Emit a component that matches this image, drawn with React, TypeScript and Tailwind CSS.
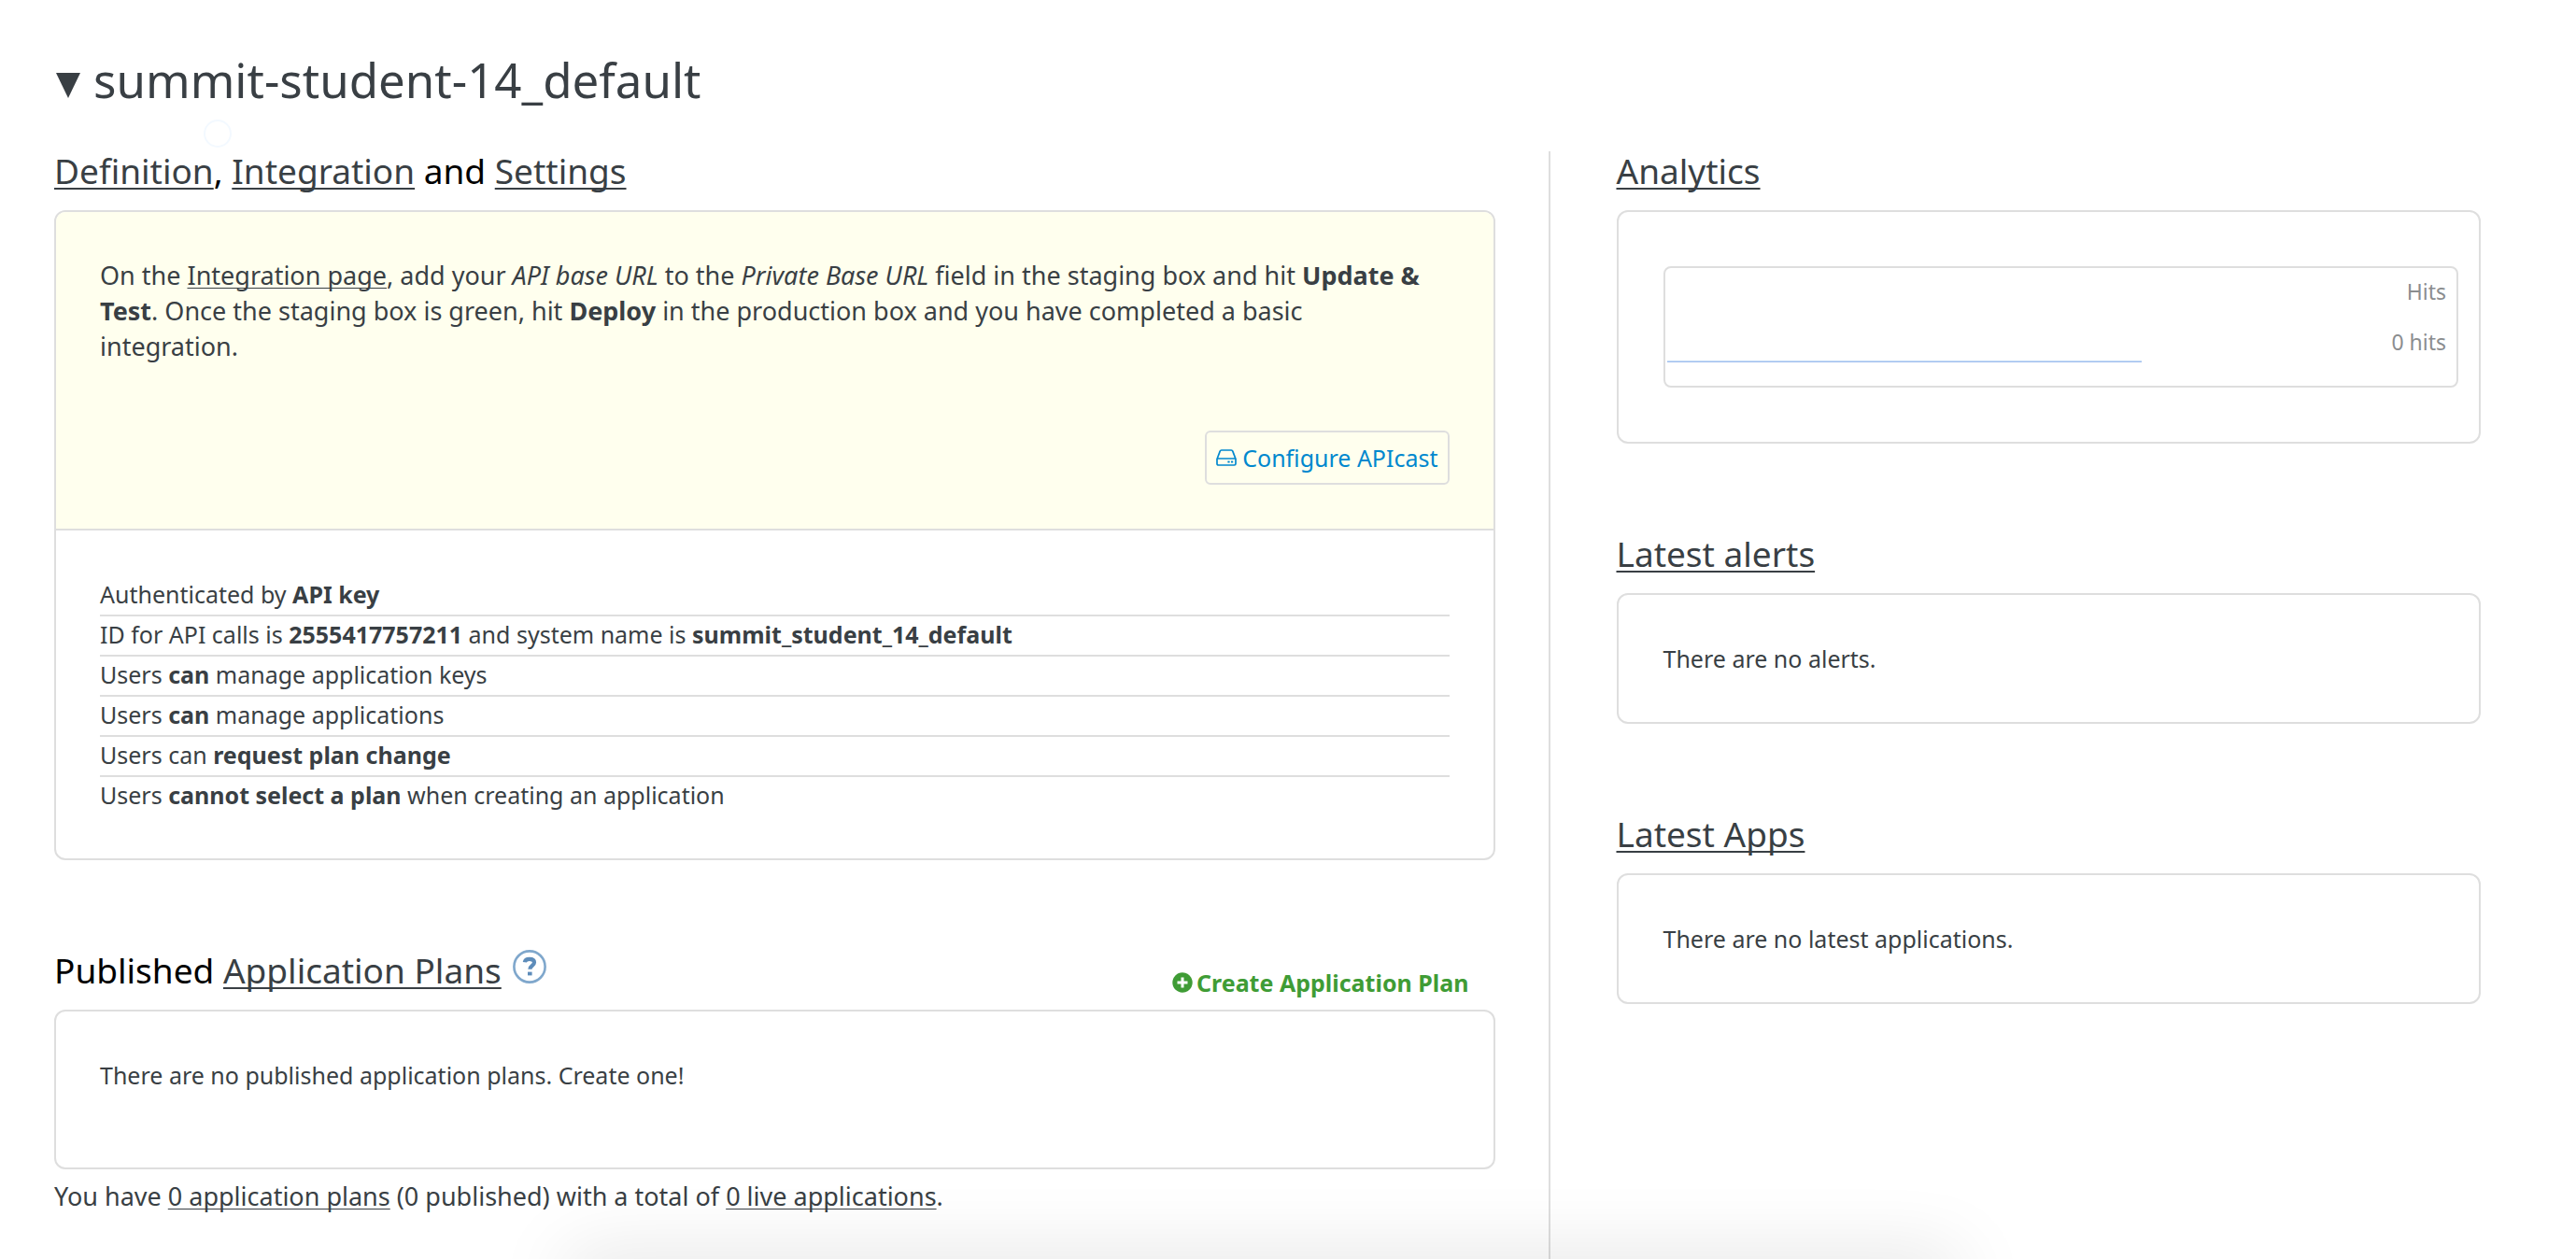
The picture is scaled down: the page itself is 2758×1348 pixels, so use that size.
import React from "react";

function TextLink({ children }: { children: React.ReactNode }) {
  return (
    <a
      href="#"
      className="text-[#393f44] underline decoration-1 underline-offset-3 [text-decoration-skip-ink:none]"
    >
      {children}
    </a>
  );
}

function HeadingLink({ children }: { children: React.ReactNode }) {
  return (
    <a
      href="#"
      className="text-[#393f44] underline decoration-2 underline-offset-4 [text-decoration-skip-ink:none]"
    >
      {children}
    </a>
  );
}

function SectionHeading({ children }: { children: React.ReactNode }) {
  return <h2 className="text-[37px] leading-9 text-black">{children}</h2>;
}

function Panel({ children, className = "" }: { children: React.ReactNode; className?: string }) {
  return (
    <div className={`overflow-hidden rounded-xl border-2 border-[#dedede] ${className}`}>{children}</div>
  );
}

function ServerIcon() {
  return (
    <svg aria-hidden="true" viewBox="0 0 22 18" className="h-[18px] w-[22px]" fill="none">
      <path
        d="M1 10.5 4.2 2.1Q4.6 1 5.7 1h10.6q1.1 0 1.5 1.1L21 10.5V15.4q0 1.6-1.6 1.6H2.6Q1 17 1 15.4ZM1.2 10h19.6"
        stroke="currentColor"
        strokeWidth="1.7"
      />
      <path d="M12.4 12.4h2.200v2.200h-2.200zM16 12.4h2.200v2.200h-2.200z" fill="currentColor" />
    </svg>
  );
}

function PlusCircleIcon() {
  return (
    <svg aria-hidden="true" viewBox="0 0 22 22" className="size-[22px]">
      <circle cx="11" cy="11" r="10.7" fill="currentColor" />
      <path d="M11 5.5v11M5.5 11h11" stroke="#fff" strokeWidth="3" />
    </svg>
  );
}

function HelpIcon() {
  return (
    <svg aria-hidden="true" viewBox="0 0 36 36" className="size-9" fill="none">
      <circle cx="18" cy="18" r="16.6" stroke="#7fa7cc" strokeWidth="2.6" />
      <path
        d="M12.800 13.200c.4-2.600 2.400-3.400 5-3.400 2.900 0 5.200 1.200 5.200 3.800 0 3.300-4.600 3.400-4.600 7.200"
        stroke="#5d8cba"
        strokeWidth="4.2"
      />
      <path d="M16 23.600h4.600v3.800H16z" fill="#5d8cba" />
    </svg>
  );
}

const facts: React.ReactNode[] = [
  <>Authenticated by <b>API key</b></>,
  <>ID for API calls is <b>2555417757211</b> and system name is <b>summit_student_14_default</b></>,
  <>Users <b>can</b> manage application keys</>,
  <>Users <b>can</b> manage applications</>,
  <>Users can <b>request plan change</b></>,
  <>Users <b>cannot select a plan</b> when creating an application</>,
];

function SideSection({ title, children }: { title: string; children: React.ReactNode }) {
  return (
    <section>
      <SectionHeading>
        <HeadingLink>{title}</HeadingLink>
      </SectionHeading>
      <Panel className="mt-6">{children}</Panel>
    </section>
  );
}

export default function App() {
  return (
    <div className="relative flex min-h-screen flex-col overflow-hidden bg-white pl-[58px] pr-[102px] pt-[55px] font-['Noto_Sans','Open_Sans',sans-serif] text-[25px] leading-[38px] text-[#393f44]">
      <h1 className="text-[51px] leading-[60px]">
        <button type="button" aria-expanded="true" className="flex items-center gap-3">
          <svg aria-hidden="true" viewBox="0 0 30 40" className="h-10 w-[30px]">
            <path d="M2 13h26L15 40z" fill="currentColor" />
          </svg>
          summit-student-14_default
        </button>
      </h1>

      <div className="relative mt-[47px] grid grow grid-cols-[5fr_130px_3fr]">
        <span className="absolute left-[160px] -top-[34px] size-[30px] rounded-full border-2 border-[#f3f9ff]" />

        <main className="pt-[3px]">
          <SectionHeading>
            <HeadingLink>Definition</HeadingLink>, <HeadingLink>Integration</HeadingLink> and{" "}
            <HeadingLink>Settings</HeadingLink>
          </SectionHeading>
          <Panel className="mt-6">
            <div className="border-b-2 border-[#dedede] bg-[#ffffee] px-[47px] pt-[49px] pb-[47px]">
              <p className="pr-3 text-[27px]">
                On the <TextLink>Integration page</TextLink>, add your <i>API base URL</i> to the{" "}
                <i>Private Base URL</i> field in the staging box and hit <b>Update &amp; Test</b>. Once the staging
                box is green, hit <b>Deploy</b> in the production box and you have completed a basic integration.
              </p>
              <div className="mt-[71px] flex justify-end">
                <button
                  type="button"
                  className="flex items-center gap-1.5 rounded-md border-2 border-[#dedede] px-2.5 py-2 text-[#0088ce]"
                >
                  <ServerIcon />
                  Configure APIcast
                </button>
              </div>
            </div>
            <ul className="px-[47px] pt-[49px] pb-[46px]">
              {facts.map((fact, i) => (
                <li key={i} className="border-b-2 border-[#dedede] pb-[3px] last:border-0">
                  {fact}
                </li>
              ))}
            </ul>
          </Panel>

          <div className="mt-[100px] flex items-start justify-between">
            <div className="flex items-start gap-3">
              <SectionHeading>
                Published <HeadingLink>Application Plans</HeadingLink>
              </SectionHeading>
              <button type="button" aria-label="Help" className="-mt-1">
                <HelpIcon />
              </button>
            </div>
            <a
              href="#"
              className="mr-7 mt-5 flex items-center gap-1 leading-[22px] font-bold text-[#3f9c35]"
            >
              <PlusCircleIcon />
              Create Application Plan
            </a>
          </div>
          <Panel className="mt-[18px] px-[47px] pt-[49px] pb-20">
            <p>There are no published application plans. Create one!</p>
          </Panel>
          <p className="mt-2.5 text-[27px]">
            You have <TextLink>0 application plans</TextLink> (0 published) with a total of{" "}
            <TextLink>0 live applications</TextLink>.
          </p>
        </main>

        <div className="ml-[57px] w-0.5 bg-[#dedede]" />

        <aside className="flex flex-col gap-[100px] pt-[3px]">
          <SideSection title="Analytics">
            <div className="py-[58px] pl-12 pr-[22px]">
              <div className="flex h-[130px] justify-between rounded-lg border-2 border-[#dedede] pr-[11px]">
                <svg
                  role="img"
                  aria-label="Hits over time"
                  viewBox="0 0 507 126"
                  preserveAspectRatio="none"
                  className="h-full w-[61%]"
                >
                  <path d="M2 99.500h505" stroke="#c5dcf6" />
                  <path d="M2 100.500h505" stroke="#a1bfee" />
                </svg>
                <div className="flex flex-col gap-4 pt-[6px] text-right text-[23px] text-[#8b8d8f]">
                  <span>Hits</span>
                  <span>0 hits</span>
                </div>
              </div>
            </div>
          </SideSection>
          <SideSection title="Latest alerts">
            <p className="px-12 py-[49px]">There are no alerts.</p>
          </SideSection>
          <SideSection title="Latest Apps">
            <p className="px-12 py-[49px]">There are no latest applications.</p>
          </SideSection>
        </aside>
      </div>

      <div className="pointer-events-none absolute left-[22%] right-[24%] -bottom-10 h-10 shadow-[0_0_80px_rgba(0,0,0,0.15)]" />
    </div>
  );
}
